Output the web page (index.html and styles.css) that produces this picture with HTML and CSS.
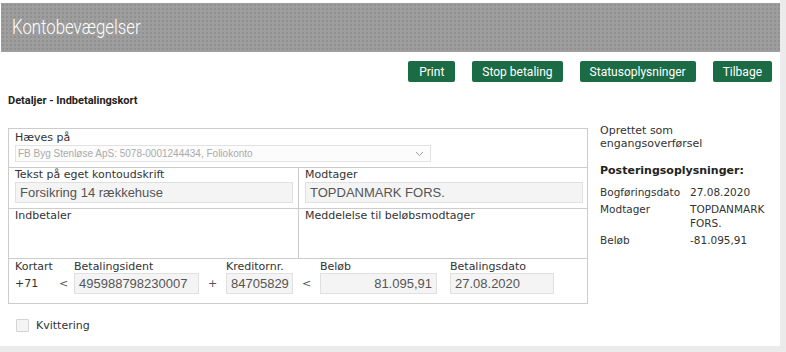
FILE: index.html
```html
<!DOCTYPE html>
<html lang="da">
<head>
  <meta charset="UTF-8">
  <meta name="viewport" content="width=device-width, initial-scale=1.0">
  <title>Kontobevægelser</title>
  <link rel="stylesheet" href="styles.css">
</head>
<body>
  <div class="page">
    <header class="banner">
      <h1>Kontobevægelser</h1>
    </header>

    <div class="toolbar">
      <button class="btn">Print</button>
      <button class="btn">Stop betaling</button>
      <button class="btn">Statusoplysninger</button>
      <button class="btn">Tilbage</button>
    </div>

    <h2 class="section-title">Detaljer - Indbetalingskort</h2>

    <div class="content">
      <div class="card-form">
        <div class="row row-account">
          <div class="cell">
            <div class="label">Hæves på</div>
            <div class="select">
              <span>FB Byg Stenløse ApS: 5078-0001244434, Foliokonto</span>
              <svg class="chevron" width="9" height="6" viewBox="0 0 9 6"><path d="M1 1l3.5 3.5L8 1" fill="none" stroke="#9a9a9a" stroke-width="1"/></svg>
            </div>
          </div>
        </div>

        <div class="row row-split">
          <div class="cell cell-left">
            <div class="label">Tekst på eget kontoudskrift</div>
            <div class="field field-wide">Forsikring 14 rækkehuse</div>
          </div>
          <div class="cell cell-right">
            <div class="label">Modtager</div>
            <div class="field field-wide">TOPDANMARK FORS.</div>
          </div>
        </div>

        <div class="row row-split row-tall">
          <div class="cell cell-left">
            <div class="label">Indbetaler</div>
          </div>
          <div class="cell cell-right">
            <div class="label">Meddelelse til beløbsmodtager</div>
          </div>
        </div>

        <div class="row row-code">
          <div class="label">Kortart</div>
          <div></div>
          <div class="label">Betalingsident</div>
          <div></div>
          <div class="label">Kreditornr.</div>
          <div></div>
          <div class="label">Beløb</div>
          <div></div>
          <div class="label">Betalingsdato</div>

          <div class="plain">+71</div>
          <div class="sign">&lt;</div>
          <div class="field">495988798230007</div>
          <div class="sign">+</div>
          <div class="field">84705829</div>
          <div class="sign">&lt;</div>
          <div class="field field-amount">81.095,91</div>
          <div></div>
          <div class="field">27.08.2020</div>
        </div>
      </div>

      <aside class="info">
        <p class="info-note">Oprettet som engangsoverførsel</p>
        <h3 class="info-title">Posteringsoplysninger:</h3>
        <table class="info-table">
          <tr><td class="key">Bogføringsdato</td><td>27.08.2020</td></tr>
          <tr><td class="key">Modtager</td><td class="wrap">TOPDANMARK FORS.</td></tr>
          <tr><td class="key">Beløb</td><td>-81.095,91</td></tr>
        </table>
      </aside>
    </div>

    <label class="receipt">
      <span class="checkbox"></span>
      Kvittering
    </label>
  </div>
</body>
</html>
```

FILE: styles.css
```css
body {
  margin: 0;
  background-color: #ebebeb;
  font-family: 'DejaVu Sans', Verdana, sans-serif;
  color: #333;
}
.page {
  width: 780px;
  height: 346px;
  background-color: #fff;
  padding-top: 3px;
  box-sizing: border-box;
  overflow: hidden;
}
.banner {
  height: 49px;
  margin-left: 1px;
  background-color: #9e9e9e;
  background-image: radial-gradient(rgba(0, 0, 0, 0.09) 1px, transparent 1.2px);
  background-size: 4px 4px;
  display: flex;
  align-items: center;
}
.banner h1 {
  margin: 0 0 1px 11px;
  font-family: Roboto, sans-serif;
  font-weight: 300;
  font-size: 21px;
  color: #fff;
  transform: scaleX(0.8);
  transform-origin: left center;
}
.toolbar {
  display: flex;
  justify-content: flex-end;
  gap: 17px;
  margin-top: 9px;
  padding-right: 8px;
}
.btn {
  height: 21px;
  padding: 0 10px;
  border: none;
  border-radius: 2px;
  background-color: #1b6b45;
  color: #fff;
  font-family: Roboto, sans-serif;
  font-size: 12px;
  cursor: pointer;
}
.btn:first-child { padding: 0 11px; }
.section-title {
  margin: 12px 0 0 8px;
  font-family: Roboto, sans-serif;
  font-weight: 700;
  font-size: 11px;
  line-height: 14px;
  color: #222;
}
.content {
  display: flex;
  align-items: flex-start;
  gap: 12px;
  margin: 20px 0 0 8px;
}
.card-form {
  width: 580px;
  border: 1px solid #ccc;
  box-sizing: border-box;
}
.label {
  font-size: 11px;
  line-height: 13px;
  color: #333;
  white-space: nowrap;
}
.row {
  border-bottom: 1px solid #ccc;
}
.row-account {
  height: 39px;
  padding: 2px 6px 0;
  box-sizing: border-box;
}
.select {
  width: 416px;
  height: 17px;
  margin-top: 1px;
  border: 1px solid #e2e2e2;
  background-color: #fcfcfc;
  box-sizing: border-box;
  display: flex;
  align-items: center;
  justify-content: space-between;
  padding: 0 6px 0 2px;
  font-family: 'Liberation Sans', Arial, sans-serif;
  font-size: 10px;
  color: #aaa;
}
.row-split {
  display: flex;
  height: 41px;
  box-sizing: border-box;
}
.row-tall {
  height: 50px;
}
.cell-left {
  width: 290px;
  border-right: 1px solid #ccc;
  padding-left: 6px;
  box-sizing: border-box;
}
.cell-right {
  padding-left: 6px;
}
.field {
  height: 21px;
  border: 1px solid #e0e0e0;
  background-color: #f4f4f4;
  box-sizing: border-box;
  padding: 0 4px;
  display: flex;
  align-items: center;
  font-family: 'Liberation Sans', Arial, sans-serif;
  font-size: 13px;
  color: #555;
  white-space: nowrap;
  overflow: hidden;
}
.field-wide {
  width: 278px;
  margin-top: 1px;
}
.row-code {
  border-bottom: none;
  display: grid;
  grid-template-columns: 38px 21px 125px 27px 67px 27px 117px 13px 104px;
  grid-template-rows: 13px 21px;
  padding: 1px 6px 9px;
}
.field-amount {
  justify-content: flex-end;
}
.plain, .sign {
  font-size: 11px;
  display: flex;
  align-items: center;
}
.sign {
  justify-content: center;
  color: #555;
}
.info {
  width: 172px;
  font-size: 11px;
  color: #333;
}
.info-note {
  margin: -4px 0 0;
  line-height: 13px;
}
.info-title {
  margin: 14px 0 0;
  font-size: 11px;
  line-height: 14px;
  font-weight: 700;
  color: #222;
}
.info-table {
  margin-top: 4px;
  border-collapse: collapse;
  font-size: 10.5px;
}
.info-table td {
  padding: 3px 0 0;
  line-height: 14px;
  vertical-align: top;
  white-space: nowrap;
}
.info-table td.key {
  width: 90px;
}
.info-table td.wrap {
  white-space: normal;
  width: 78px;
}
.receipt {
  display: flex;
  align-items: center;
  gap: 7px;
  margin: 15px 0 0 16px;
  font-size: 11px;
  color: #333;
}
.checkbox {
  width: 11px;
  height: 11px;
  border: 1px solid #d4d4d4;
  background-color: #f4f4f4;
  border-radius: 1px;
}
```
